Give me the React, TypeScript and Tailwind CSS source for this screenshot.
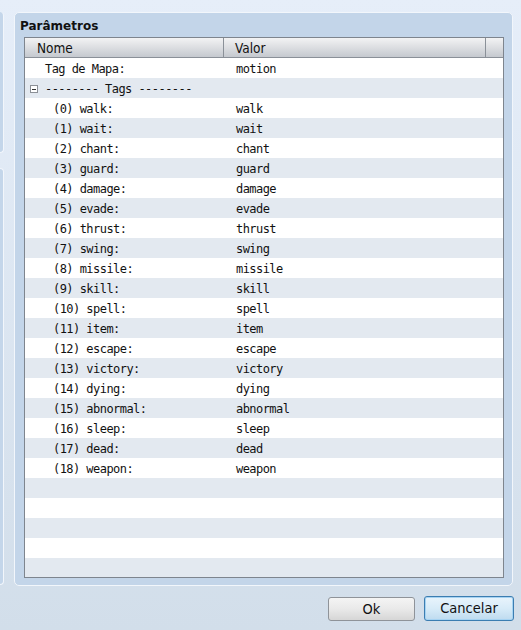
import React from "react";

const tags = [
  "walk", "wait", "chant", "guard", "damage", "evade", "thrust", "swing", "missile",
  "skill", "spell", "item", "escape", "victory", "dying", "abnormal", "sleep", "dead", "weapon",
];

type Row = { kind: "top" | "group" | "child" | "empty"; name?: string; value?: string };

const rows: Row[] = [
  { kind: "top", name: "Tag de Mapa:", value: "motion" },
  { kind: "group", name: "-------- Tags --------" },
  ...tags.map((t, i) => ({ kind: "child" as const, name: `(${i}) ${t}:`, value: t })),
  { kind: "empty" }, { kind: "empty" }, { kind: "empty" }, { kind: "empty" }, { kind: "empty" },
];

const ui = { fontFamily: '"DejaVu Sans Condensed", "DejaVu Sans", sans-serif', fontStretch: "condensed" } as React.CSSProperties;
const mono = { fontFamily: '"DejaVu Sans Mono", monospace' } as React.CSSProperties;

export default function App() {
  return (
    <div className="w-[521px] h-[630px] flex flex-col bg-gradient-to-b from-[#e6eef9] to-[#d2deea] overflow-hidden">
      <div className="flex pt-[12px]">
        <div className="w-[4px] flex flex-col">
          <div className="h-[141px] bg-[#c4d6ea] border-r border-b border-[#f2f6fb] rounded-br-[4px] rounded-tr-[4px]" />
          <div className="h-[417px] mt-[15px] bg-[#c4d6ea] border-r border-t border-b border-[#f2f6fb] rounded-tr-[4px] rounded-br-[4px]" />
        </div>
        <div className="ml-[10px] w-[499px] h-[574px] rounded-[5px] border border-[#f2f6fb] bg-[#c3d5e9] pt-[6px] flex flex-col">
          <div
            className="pl-[5px] text-[12px] leading-[14px] font-bold text-[#111]"
            style={{ fontFamily: '"DejaVu Sans", sans-serif' }}
          >
            Parâmetros
          </div>
          <div className="ml-[9px] mt-[4px] w-[480px] h-[541px] border border-[#7e858e] bg-white flex flex-col overflow-hidden">
            <div
              className="flex h-[20px] shrink-0 border-b border-[#8a9098] bg-gradient-to-b from-[#f3f3f4] to-[#c5c9cf] text-[13.5px] text-[#111]"
              style={ui}
            >
              <div className="w-[199px] pl-[12px] pt-[1px] leading-[18px] border-r border-[#8a9098]">Nome</div>
              <div className="w-[262px] pl-[11px] pt-[1px] leading-[18px] border-r border-[#8a9098]">Valor</div>
              <div className="flex-1" />
            </div>
            {rows.map((r, i) => (
              <div
                key={i}
                className={`flex h-[20px] shrink-0 pt-[2px] text-[12px] leading-[19px] tracking-[-0.55px] text-[#111] ${
                  i % 2 === 0 ? "bg-white" : "bg-[#e3e9f0]"
                }`}
                style={mono}
              >
                {r.kind === "group" ? (
                  <div className="w-[199px] flex items-center pl-[5px] whitespace-pre">
                    <div className="w-[8px] h-[8px] border border-[#8c9096] bg-white flex items-center justify-center mr-[7px]">
                      <div className="w-[4px] h-[1px] bg-[#333]" />
                    </div>
                    {r.name}
                  </div>
                ) : (
                  <div
                    className={`w-[200px] whitespace-pre ${r.kind === "child" ? "pl-[28px]" : "pl-[20px]"}`}
                  >
                    {r.name ?? ""}
                  </div>
                )}
                <div className="flex-1 pl-[11px] whitespace-pre">{r.value ?? ""}</div>
              </div>
            ))}
          </div>
        </div>
      </div>
      <div className="flex justify-end pr-[7px] mt-[11px] gap-[9px]" style={ui}>
        <button className="w-[87px] h-[24px] rounded-[3px] border border-[#8f9399] bg-gradient-to-b from-[#f4f4f4] via-[#e9e9e9] to-[#d6d6d6] text-[14.5px] leading-[22px] text-[#111]">
          Ok
        </button>
        <button className="w-[90px] h-[25px] -mt-[1px] rounded-[3px] border border-[#3c7db1] shadow-[inset_0_0_0_1px_#a6d3f2] bg-gradient-to-b from-[#e9f4fc] via-[#d7ebf8] to-[#bedbef] text-[14.5px] leading-[23px] text-[#111]">
          Cancelar
        </button>
      </div>
    </div>
  );
}
